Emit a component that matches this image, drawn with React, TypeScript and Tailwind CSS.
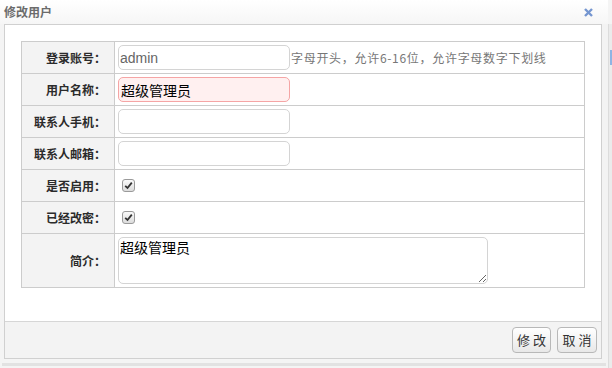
import React from "react";

const cjk = "font-['Noto_Sans_CJK_SC',sans-serif]";

function Check() {
  return (
    <span className="ml-[7px] flex h-[13px] w-[13px] items-center justify-center rounded-[3px] border border-[#9a9a9a] bg-gradient-to-b from-[#fafafa] to-[#dcdcdc]">
      <svg width="9" height="9" viewBox="0 0 9 9">
        <path d="M1.2 4.8 L3.5 7 L7.8 1.6" fill="none" stroke="#333" strokeWidth="1.8" />
      </svg>
    </span>
  );
}

function Row({
  label,
  children,
  tall = false,
}: {
  label: string;
  children: React.ReactNode;
  tall?: boolean;
}) {
  return (
    <div className={`flex ${tall ? "h-[54px]" : "h-[32px]"}`}>
      <div className="flex w-[93px] shrink-0 items-center justify-end border-r border-b border-[#cccccc] bg-[#f3f3f3] pr-[8px] text-[12px] font-bold text-[#2b2b2b]">
        {label}
      </div>
      <div className={`flex flex-1 border-r border-b border-[#cccccc] bg-white ${tall ? "items-start pt-[3px]" : "items-center"}`}>
        {children}
      </div>
    </div>
  );
}

export default function App() {
  return (
    <div className={`relative h-[368px] w-[612px] overflow-hidden bg-[#f4f4f4] ${cjk}`}>
      {/* title bar */}
      <div className="flex h-[24px] w-[608px] items-center justify-between bg-gradient-to-b from-white to-[#f6f6f6] pl-[4px] pr-[15px]">
        <span className="text-[12px] font-bold text-[#6b6b6b]">修改用户</span>
        <svg width="9" height="9" viewBox="0 0 9 9">
          <path d="M1 1 L8 8 M8 1 L1 8" stroke="#7596d0" strokeWidth="2.4" />
        </svg>
      </div>

      <div className="flex">
        <div className="w-[4px]" />
        {/* dialog panel */}
        <div className="flex h-[335px] w-[598px] flex-col border border-[#d0d0d0] bg-white">
          <div className="flex-1 p-[16px]">
            <div className="border-t border-l border-[#cccccc]">
              <Row label="登录账号：">
                <input
                  readOnly
                  value="admin"
                  className="ml-[3px] h-[25px] w-[172px] rounded-[5px] border border-[#d4d4d4] px-[1px] font-['Liberation_Sans',sans-serif] text-[14px] text-[#666] outline-none"
                />
                <span className="ml-[1px] text-[12px] tracking-[0.7px] text-[#777]">字母开头，允许6-16位，允许字母数字下划线</span>
              </Row>
              <Row label="用户名称：">
                <input
                  readOnly
                  value="超级管理员"
                  className="ml-[3px] h-[25px] w-[172px] rounded-[5px] border border-[#f5a5a5] bg-[#fff0f0] px-[2px] text-[14px] text-black outline-none"
                />
              </Row>
              <Row label="联系人手机：">
                <input readOnly className="ml-[3px] h-[25px] w-[172px] rounded-[5px] border border-[#d4d4d4] outline-none" />
              </Row>
              <Row label="联系人邮箱：">
                <input readOnly className="ml-[3px] h-[25px] w-[172px] rounded-[5px] border border-[#d4d4d4] outline-none" />
              </Row>
              <Row label="是否启用：">
                <Check />
              </Row>
              <Row label="已经改密：">
                <Check />
              </Row>
              <Row label="简介：" tall>
                <textarea
                  readOnly
                  value="超级管理员"
                  className="ml-[3px] h-[47px] w-[370px] resize rounded-[5px] border border-[#d4d4d4] px-[1px] py-0 text-[14px] leading-[18px] text-black outline-none"
                />
              </Row>
            </div>
          </div>
          {/* footer */}
          <div className="flex h-[37px] items-center justify-end gap-[6px] border-t border-[#d6d6d6] bg-[#f3f3f3] pr-[4px]">
            <button className="h-[26px] w-[39px] rounded-[4px] border border-[#b8b8b8] bg-gradient-to-b from-white to-[#e8e8e8] text-[13px] text-[#333]">
              修 改
            </button>
            <button className="h-[26px] w-[40px] rounded-[4px] border border-[#b8b8b8] bg-gradient-to-b from-white to-[#e8e8e8] text-[13px] text-[#333]">
              取 消
            </button>
          </div>
        </div>
        {/* shadow + page scrollbar */}
        <div className="w-[6px] bg-[#f3f3f3]" />
        <div className="h-[344px] w-[4px] border-l border-[#dcdcdc] bg-[#ebebeb]">
          <div className="ml-[1px] mt-[26px] h-[15px] w-[2px] bg-[#8fb4e3]" />
        </div>
      </div>
      <div className="absolute bottom-[2px] left-[2px] h-[3px] w-[604px] bg-[#e2e2e2]" />
    </div>
  );
}
